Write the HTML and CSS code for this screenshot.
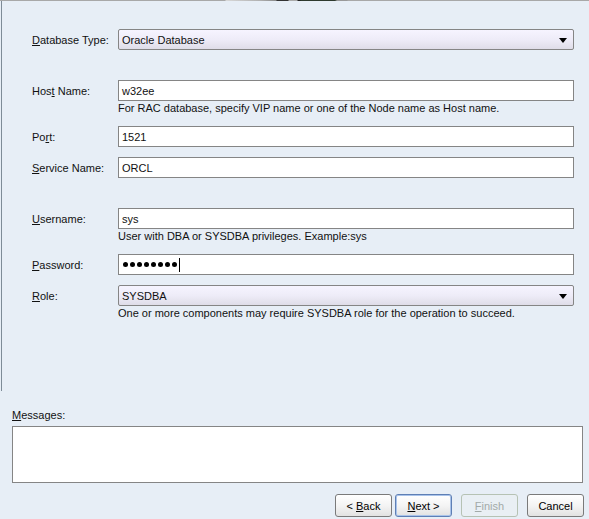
FILE: index.html
```html
<!DOCTYPE html>
<html>
<head>
<meta charset="utf-8">
<link rel="stylesheet" href="styles.css">
</head>
<body>
<div class="topstrip"></div>
<div class="panel">
  <div class="row">
    <label class="lbl"><u>D</u>atabase Type:</label>
    <div class="select"><span>Oracle Database</span><span class="arrow"></span></div>
  </div>

  <div class="row gap-lg">
    <label class="lbl">Hos<u>t</u> Name:</label>
    <div class="input">w32ee</div>
  </div>
  <div class="help">For RAC database, specify VIP name or one of the Node name as Host name.</div>

  <div class="row gap-help">
    <label class="lbl">Po<u>r</u>t:</label>
    <div class="input">1521</div>
  </div>
  <div class="row gap-sm">
    <label class="lbl"><u>S</u>ervice Name:</label>
    <div class="input">ORCL</div>
  </div>

  <div class="row gap-lg">
    <label class="lbl"><u>U</u>sername:</label>
    <div class="input">sys</div>
  </div>
  <div class="help">User with DBA or SYSDBA privileges. Example:sys</div>

  <div class="row gap-help">
    <label class="lbl"><u>P</u>assword:</label>
    <div class="input pwd"><span class="dot"></span><span class="dot"></span><span class="dot"></span><span class="dot"></span><span class="dot"></span><span class="dot"></span><span class="dot"></span><span class="dot"></span><span class="caret"></span></div>
  </div>
  <div class="row gap-sm">
    <label class="lbl"><u>R</u>ole:</label>
    <div class="select"><span>SYSDBA</span><span class="arrow"></span></div>
  </div>
  <div class="help">One or more components may require SYSDBA role for the operation to succeed.</div>
</div>

<div class="bottom">
  <div class="msg-label"><u>M</u>essages:</div>
  <div class="messages"></div>
  <div class="buttons">
    <div class="btn"><span>&lt; <u>B</u>ack</span></div>
    <div class="btn default"><span><u>N</u>ext &gt;</span></div>
    <div class="btn disabled wide-gap"><span><u>F</u>inish</span></div>
    <div class="btn wide-gap"><span>Cancel</span></div>
  </div>
</div>
</body>
</html>
```

FILE: styles.css
```css
html, body {
  margin: 0;
  padding: 0;
}
body {
  width: 589px;
  height: 519px;
  overflow: hidden;
  background: #e7eef6;
  font-family: "Liberation Sans", Arial, sans-serif;
  font-size: 11px;
  color: #111;
}
u {
  text-decoration: underline;
  text-underline-offset: 1px;
}
.topstrip {
  height: 1px;
  background: linear-gradient(to right,
    #a8a8a8 0, #a8a8a8 225px,
    #d8d8d8 226px, #b0b0b0 260px, #8a8a8a 276px,
    #333 277px, #333 288px,
    #aaa 289px, #aaa 297px,
    #222 298px, #222 300px,
    #2e3a2e 301px, #2e3a2e 335px,
    #999 337px, #999 347px,
    #a8a8a8 348px, #a8a8a8 100%);
}
.panel {
  margin-left: 1px;
  border-left: 1px solid #7e8b97;
  height: 390px;
  box-sizing: border-box;
  padding: 28px 15px 0 30px;
}
.row {
  display: grid;
  grid-template-columns: 86px 1fr;
  align-items: center;
}
.gap-lg { margin-top: 30px; }
.gap-sm { margin-top: 10px; }
.gap-help { margin-top: 11px; }
.lbl {
  white-space: nowrap;
}
.input, .select {
  height: 21px;
  box-sizing: border-box;
  border: 1px solid #858585;
  background: #fff;
  display: flex;
  align-items: center;
  padding-left: 3px;
  line-height: 14px;
}
.select {
  border-radius: 2px;
  background: linear-gradient(to bottom, #f6f4ff 0%, #eeecf8 50%, #dfdde8 100%);
  justify-content: space-between;
  padding-right: 6px;
}
.arrow {
  width: 0;
  height: 0;
  border-left: 4px solid transparent;
  border-right: 4px solid transparent;
  border-top: 5px solid #000;
  margin-top: 1px;
}
.help {
  margin-left: 86px;
  line-height: 14px;
  height: 14px;
}
.pwd {
  padding-left: 4px;
  gap: 2px;
}
.dot {
  width: 5px;
  height: 5px;
  border-radius: 50%;
  background: #000;
  flex: none;
}
.caret {
  width: 1px;
  height: 14px;
  background: #000;
}
.bottom {
  padding: 0 5px 0 12px;
}
.msg-label {
  margin-top: 17px;
  line-height: 14px;
  height: 14px;
}
.messages {
  margin-top: 4px;
  width: 571px;
  height: 57px;
  box-sizing: border-box;
  border: 1px solid #858585;
  background: #fff;
}
.buttons {
  margin-top: 11px;
  display: flex;
  justify-content: flex-end;
  gap: 3px;
}
.btn {
  width: 57px;
  height: 23px;
  box-sizing: border-box;
  border: 1px solid #7a7a7a;
  border-radius: 3px;
  background: linear-gradient(to bottom, #ffffff 0%, #f4f4f4 50%, #e2e2e2 100%);
  display: flex;
  align-items: center;
  justify-content: center;
  font-size: 11px;
  color: #000;
  white-space: pre;
}
.btn.default {
  border: 1px solid #5e7fb5;
  box-shadow: inset 0 0 0 1px #a9c3ea;
}
.btn.disabled {
  border-color: #b6c2b4;
  background: #e9eff4;
  color: #a2aaa8;
}
.wide-gap {
  margin-left: 6px;
}
```
